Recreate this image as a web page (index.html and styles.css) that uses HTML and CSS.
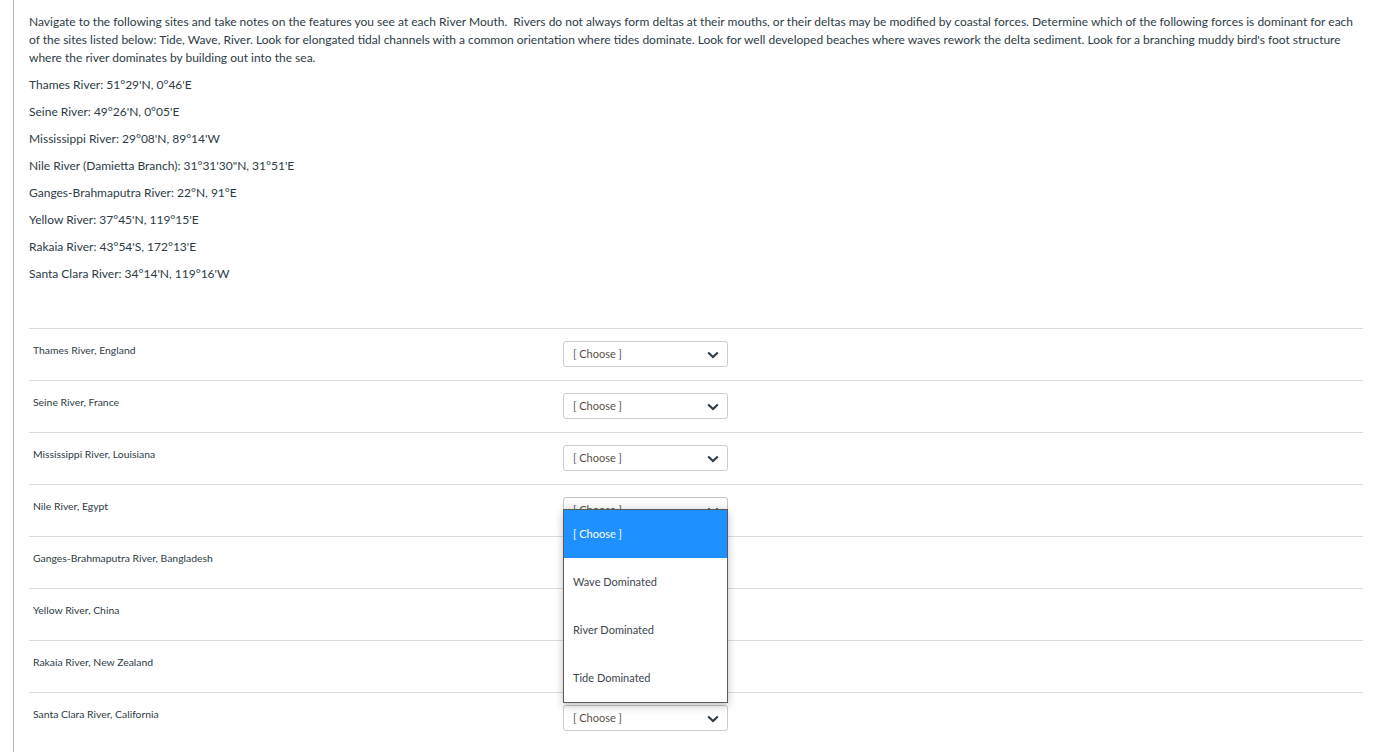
FILE: index.html
```html
<!DOCTYPE html>
<html>
<head>
<meta charset="utf-8">
<link rel="stylesheet" href="styles.css">
</head>
<body>
<div class="question">
  <p>Navigate to the following sites and take notes on the features you see at each River Mouth.&nbsp; Rivers do not always form deltas at their mouths, or their deltas may be modified by coastal forces. Determine which of the following forces is dominant for each of the sites listed below: Tide, Wave, River. Look for elongated tidal channels with a common orientation where tides dominate. Look for well developed beaches where waves rework the delta sediment. Look for a branching muddy bird's foot structure where the river dominates by building out into the sea.</p>
  <p>Thames River: 51°29'N, 0°46'E</p>
  <p>Seine River: 49°26'N, 0°05'E</p>
  <p>Mississippi River: 29°08'N, 89°14'W</p>
  <p>Nile River (Damietta Branch): 31°31'30"N, 31°51'E</p>
  <p>Ganges-Brahmaputra River: 22°N, 91°E</p>
  <p>Yellow River: 37°45'N, 119°15'E</p>
  <p>Rakaia River: 43°54'S, 172°13'E</p>
  <p>Santa Clara River: 34°14'N, 119°16'W</p>

  <div class="matches">
    <div class="row">
      <div class="label">Thames River, England</div>
      <div class="cell"><div class="select"><span>[ Choose ]</span><svg class="chev" viewBox="0 0 12 8" width="12" height="8"><path d="M1.2 1.4 L6 6 L10.8 1.4" fill="none" stroke="#2d3b45" stroke-width="2.1"/></svg></div></div>
    </div>
    <div class="row">
      <div class="label">Seine River, France</div>
      <div class="cell"><div class="select"><span>[ Choose ]</span><svg class="chev" viewBox="0 0 12 8" width="12" height="8"><path d="M1.2 1.4 L6 6 L10.8 1.4" fill="none" stroke="#2d3b45" stroke-width="2.1"/></svg></div></div>
    </div>
    <div class="row">
      <div class="label">Mississippi River, Louisiana</div>
      <div class="cell"><div class="select"><span>[ Choose ]</span><svg class="chev" viewBox="0 0 12 8" width="12" height="8"><path d="M1.2 1.4 L6 6 L10.8 1.4" fill="none" stroke="#2d3b45" stroke-width="2.1"/></svg></div></div>
    </div>
    <div class="row">
      <div class="label">Nile River, Egypt</div>
      <div class="cell">
        <div class="select open"><span>[ Choose ]</span><svg class="chev" viewBox="0 0 12 8" width="12" height="8"><path d="M1.2 1.4 L6 6 L10.8 1.4" fill="none" stroke="#2d3b45" stroke-width="2.1"/></svg></div>
        <ul class="dropdown">
          <li class="active">[ Choose ]</li>
          <li>Wave Dominated</li>
          <li>River Dominated</li>
          <li>Tide Dominated</li>
        </ul>
      </div>
    </div>
    <div class="row">
      <div class="label">Ganges-Brahmaputra River, Bangladesh</div>
      <div class="cell"><div class="select"><span>[ Choose ]</span><svg class="chev" viewBox="0 0 12 8" width="12" height="8"><path d="M1.2 1.4 L6 6 L10.8 1.4" fill="none" stroke="#2d3b45" stroke-width="2.1"/></svg></div></div>
    </div>
    <div class="row">
      <div class="label">Yellow River, China</div>
      <div class="cell"><div class="select"><span>[ Choose ]</span><svg class="chev" viewBox="0 0 12 8" width="12" height="8"><path d="M1.2 1.4 L6 6 L10.8 1.4" fill="none" stroke="#2d3b45" stroke-width="2.1"/></svg></div></div>
    </div>
    <div class="row">
      <div class="label">Rakaia River, New Zealand</div>
      <div class="cell"><div class="select"><span>[ Choose ]</span><svg class="chev" viewBox="0 0 12 8" width="12" height="8"><path d="M1.2 1.4 L6 6 L10.8 1.4" fill="none" stroke="#2d3b45" stroke-width="2.1"/></svg></div></div>
    </div>
    <div class="row">
      <div class="label">Santa Clara River, California</div>
      <div class="cell"><div class="select"><span>[ Choose ]</span><svg class="chev" viewBox="0 0 12 8" width="12" height="8"><path d="M1.2 1.4 L6 6 L10.8 1.4" fill="none" stroke="#2d3b45" stroke-width="2.1"/></svg></div></div>
    </div>
  </div>
</div>
</body>
</html>
```

FILE: styles.css
```css
html, body {
  margin: 0;
  padding: 0;
  background: #ffffff;
}
body {
  font-family: Lato, "Liberation Sans", sans-serif;
  color: #2d3b45;
  height: 752px;
  overflow: hidden;
}
.question {
  margin-left: 13px;
  border-left: 1px solid #b5b5b5;
  padding: 13px 14px 0 15px;
  min-height: 752px;
  box-sizing: border-box;
}
.question p {
  margin: 0 0 9px 0;
  font-size: 12px;
  line-height: 18px;
}
.matches {
  margin-top: 45px;
  border-top: 1px solid #dcdcdc;
}
.row {
  display: grid;
  grid-template-columns: 534px 1fr;
  height: 51px;
  border-bottom: 1px solid #dcdcdc;
}
.row:last-child {
  border-bottom: none;
}
.label {
  font-size: 10.4px;
  line-height: 14px;
  padding: 14px 0 0 4px;
}
.cell {
  position: relative;
  padding-top: 12px;
}
.select {
  width: 165px;
  height: 26px;
  box-sizing: border-box;
  border: 1px solid #c7cdd1;
  border-radius: 3px;
  display: flex;
  align-items: center;
  justify-content: space-between;
  padding: 0 8px 0 9px;
  font-size: 11px;
  color: #5b5148;
  background: #fff;
}
.select span {
  margin-top: -1px;
}
.chev {
  display: block;
  margin-top: 2px;
}
.select.open {
  background: linear-gradient(#ffffff, #ececec);
  border-color: #c4c4c4;
}
.dropdown {
  position: absolute;
  left: 0;
  top: 24px;
  width: 165px;
  box-sizing: border-box;
  margin: 0;
  padding: 0;
  list-style: none;
  border: 1px solid #5a5a5a;
  background: #fff;
  box-shadow: 0 3px 8px rgba(0, 0, 0, 0.25);
  z-index: 5;
}
.dropdown li {
  height: 48px;
  line-height: 48px;
  padding-left: 9px;
  font-size: 11px;
  color: #3d4650;
}
.dropdown li.active {
  background: #1e90ff;
  color: #ffffff;
}
```
